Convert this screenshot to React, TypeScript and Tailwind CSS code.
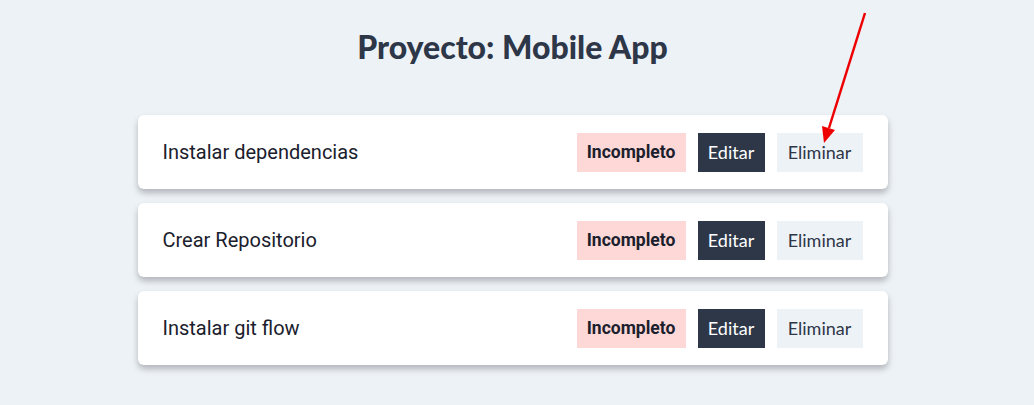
const tareas = [
  { nombre: "Instalar dependencias", estado: false },
  { nombre: "Crear Repositorio", estado: false },
  { nombre: "Instalar git flow", estado: false },
];

function Tarea({ nombre, estado }: { nombre: string; estado: boolean }) {
  return (
    <li className="flex h-[74px] items-center justify-between rounded-md bg-white pl-[25px] pr-[25px] shadow-[0_4px_6px_rgba(0,0,0,0.25)]">
      <span className="font-['Roboto',sans-serif] text-[20px] text-[#1a202c]">{nombre}</span>
      <div className="flex h-[39px] items-stretch gap-3">
        <span className="flex w-[109px] items-center justify-center bg-[#fed7d7] font-['Roboto',sans-serif] text-[17.5px] font-bold text-[#1a202c]">
          {estado ? "Completo" : "Incompleto"}
        </span>
        <button className="flex w-[67px] items-center justify-center bg-[#2d3748] font-['Lato',sans-serif] text-[18px] text-white">
          Editar
        </button>
        <button className="flex w-[86px] items-center justify-center bg-[#edf2f7] font-['Lato',sans-serif] text-[18px] text-[#2d3748]">
          Eliminar
        </button>
      </div>
    </li>
  );
}

export default function App() {
  return (
    <div className="relative min-h-screen bg-[#edf2f7]">
      <div className="w-[1025px]">
        <h1 className="pt-[28px] text-center font-['Lato',sans-serif] text-[32px] font-black leading-[38px] text-[#2d3748]">
          Proyecto: Mobile App
        </h1>
        <ul className="mx-auto mt-[49px] flex w-[750px] flex-col gap-[14px]">
          {tareas.map((t) => (
            <Tarea key={t.nombre} {...t} />
          ))}
        </ul>
      </div>
      <svg className="pointer-events-none absolute left-0 top-0" width="1034" height="405">
        <line x1="865" y1="13" x2="829" y2="128" stroke="#ee0000" strokeWidth="2.5" />
        <polygon points="824,143 822,126 835,130" fill="#ee0000" />
      </svg>
    </div>
  );
}
